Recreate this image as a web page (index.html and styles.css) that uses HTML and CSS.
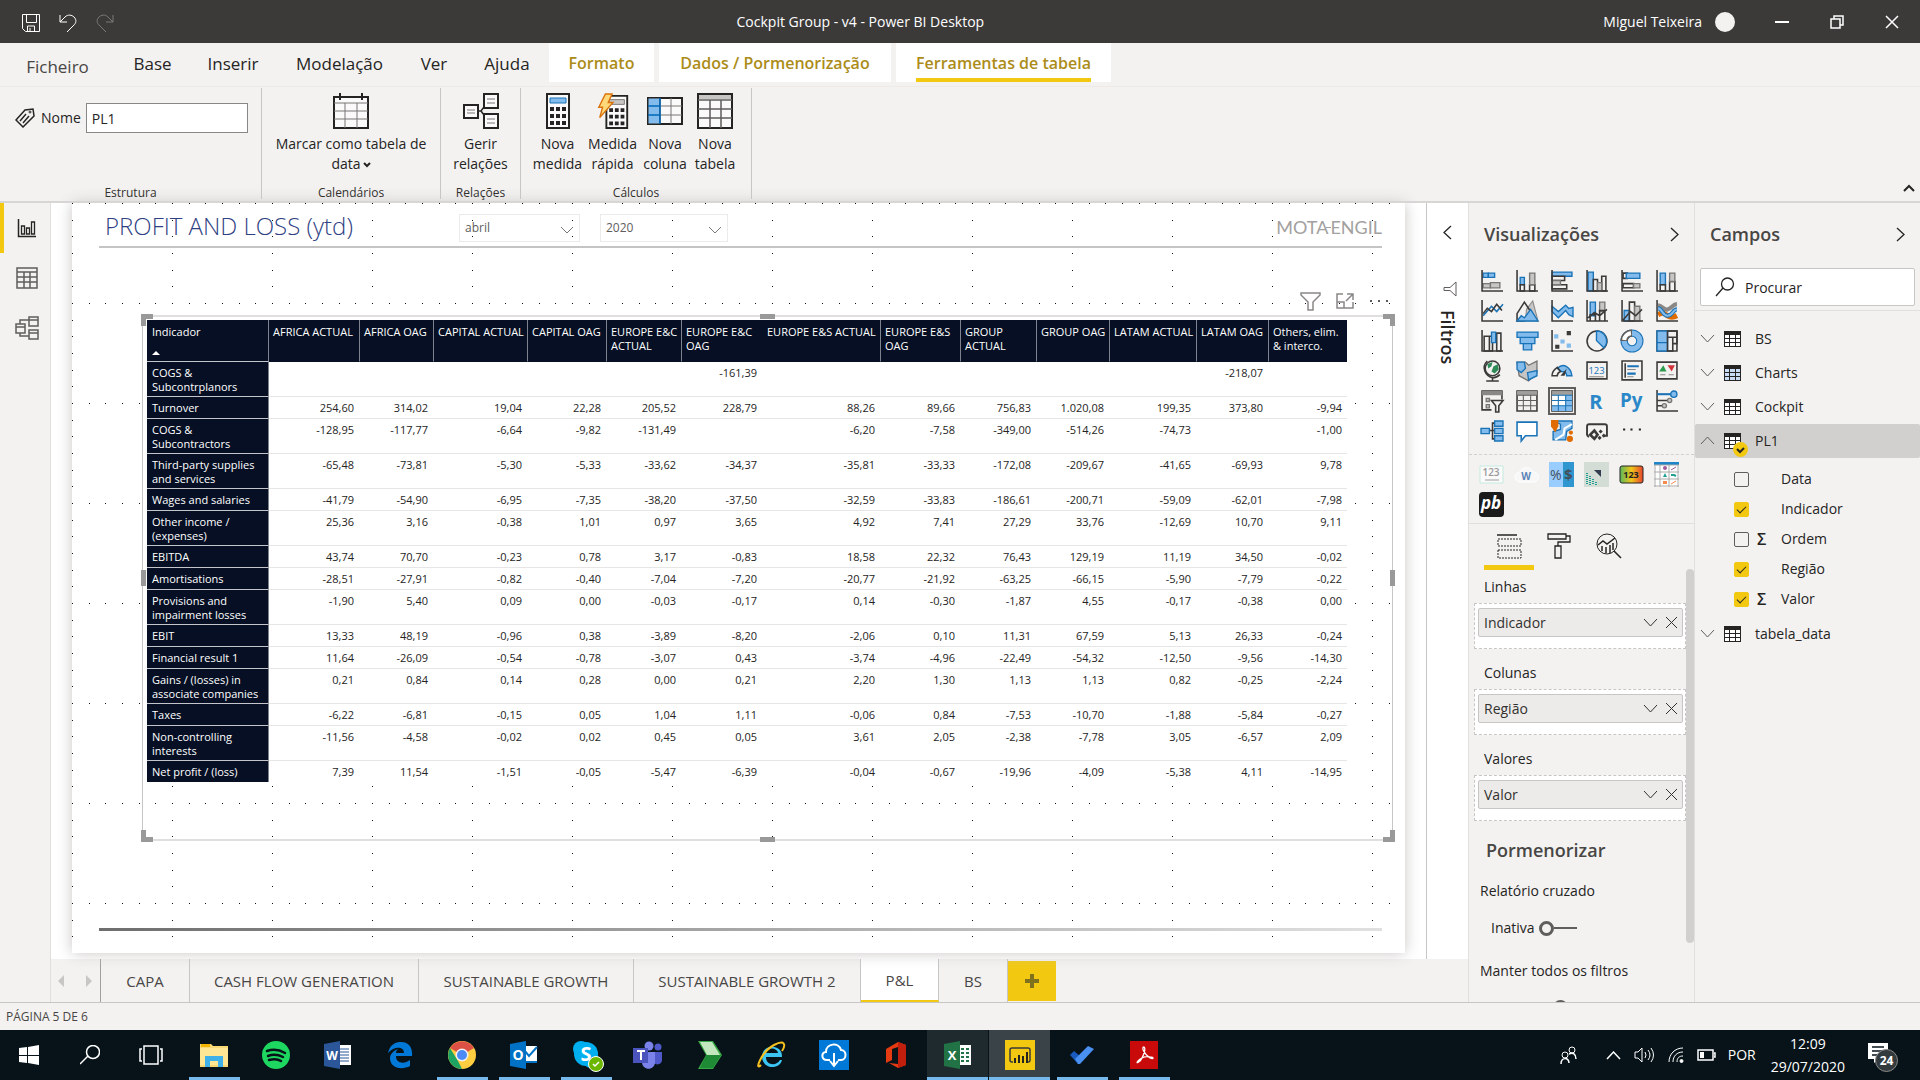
FILE: index.html
```html
<!DOCTYPE html>
<html lang="pt">
<head>
<meta charset="utf-8">
<title>Cockpit Group - v4 - Power BI Desktop</title>
<link rel="stylesheet" href="styles.css">
</head>
<body>
<header class="titlebar">
  <div class="quick">
    <button aria-label="Guardar"><svg width="18" height="18" viewBox="0 0 18 18" class="ln"><path d="M.5.5h17v17h-14l-3-3zM4.500.5v8h10v-8M5.500 17v-5h7v5M8 14v3"/></svg></button>
    <button aria-label="Anular"><svg width="18" height="19" viewBox="0 0 18 19" class="ln"><path d="M1 1v7h7M1 8l5-5c3-3 7-2 9 0 3 3 2 6 0 8l-7 7"/></svg></button>
    <button aria-label="Refazer" class="dim"><svg width="18" height="19" viewBox="0 0 18 19" class="ln"><path d="M17 1v7h-7M17 8l-5-5C9 0 5 1 3 3 0 6 1 9 3 11l7 7"/></svg></button>
  </div>
  <h1>Cockpit Group - v4 - Power BI Desktop</h1>
  <div class="account">
    <span>Miguel Teixeira</span><i class="avatar"></i>
    <button aria-label="Minimizar"><svg width="14" height="14" viewBox="0 0 14 14" class="ln"><path d="M0 7h14" stroke-width="2"/></svg></button>
    <button aria-label="Restaurar"><svg width="14" height="14" viewBox="0 0 14 14" class="ln"><path d="M1 4h9v9H1zM4 4V1h9v9h-3" stroke-width="1.500"/></svg></button>
    <button aria-label="Fechar"><svg width="14" height="14" viewBox="0 0 14 14" class="ln"><path d="M1 1l12 12M13 1L1 13" stroke-width="1.500"/></svg></button>
  </div>
</header>

<nav class="menu">
  <a href="#" class="m-file">Ficheiro</a><a href="#" class="m-base">Base</a><a href="#" class="m-ins">Inserir</a><a href="#" class="m-mod">Modelação</a><a href="#" class="m-ver">Ver</a><a href="#" class="m-aj">Ajuda</a>
  <a href="#" class="ctx c-fmt">Formato</a><a href="#" class="ctx c-dad">Dados / Pormenorização</a><a href="#" class="ctx c-fer on"><span>Ferramentas de tabela</span></a>
</nav>

<section class="ribbon">
  <div class="group g1">
    <div class="tools name-row">
      <svg width="20" height="20" viewBox="0 0 20 20" class="ln"><path d="M1 12L10 2l8-1 1 7-11 11zM5 13l6-7M8 15l6-7" stroke-width="1.500"/><circle cx="15" cy="4" r="1"/></svg>
      <label for="nome">Nome</label><input id="nome" value="PL1">
    </div>
    <h2>Estrutura</h2>
  </div>
  <div class="group g2">
    <div class="tools"><button><svg width="36" height="36" viewBox="0 0 36 36" class="ln"><path d="M1 4h34v31H1z" fill="#fafafa" stroke-width="2"/><path d="M1 10h34M1 18h34M1 26h34M12 10v25M24 10v25" stroke="#797775"/><path d="M7 0v7M29 0v7" stroke-width="2"/></svg><span>Marcar como tabela de<br>data<svg width="8" height="8" viewBox="0 0 8 8" class="ln"><path d="M1 2l3 3 3-3" stroke-width="2"/></svg></span></button></div>
    <h2>Calendários</h2>
  </div>
  <div class="group g3">
    <div class="tools"><button><svg width="36" height="36" viewBox="0 0 36 36" class="ln"><path d="M15 18h3l6-8M18 18l6 8" stroke-width="1.500"/><path d="M1 12h14v13H1zM21 1h14v14H21zM21 21h14v14H21z" fill="#fafafa" stroke-width="2"/><path d="M4 17h8M4 20h8M24 6h8M24 10h8M24 26h8M24 30h8" stroke="#797775"/></svg><span>Gerir<br>relações</span></button></div>
    <h2>Relações</h2>
  </div>
  <div class="group g4">
    <div class="tools">
      <button class="b55"><svg width="24" height="36" viewBox="0 0 24 36" class="ln"><path d="M1 1h22v34H1z" fill="#fafafa" stroke-width="2"/><path d="M4 5h16v5H4z" fill="#83bcec" stroke="#1a73b7"/><path d="M4 16h16M4 23h16M4 30h16" stroke-width="4" stroke-dasharray="4 2"/></svg><span>Nova<br>medida</span></button>
      <button class="b55"><svg width="32" height="38" viewBox="0 0 32 38" class="ln"><path d="M9 3h22v34H9z" fill="#fafafa" stroke-width="2"/><path d="M12 7h16v5H12z" fill="#c8c6c4" stroke="#797775"/><path d="M12 18h16M12 25h16M12 32h16" stroke-width="4" stroke-dasharray="4 2"/><path d="M8 1h7l-4 9h5L2 26l3-11H1z" fill="#ffd97a" stroke="#d9730d" stroke-width="1.500"/></svg><span>Medida<br>rápida</span></button>
      <button class="b50"><svg width="36" height="36" viewBox="0 0 36 36" class="ln"><path d="M1 5h34v26H1z" fill="#fafafa" stroke-width="2"/><path d="M1 5h12v26H1z" fill="#83bcec"/><path d="M13 13h22M13 22h22M24 5v26" stroke="#797775"/><path d="M13 5v26M1 13h12M1 22h12" stroke="#0067b8" stroke-width="1.500"/></svg><span>Nova<br>coluna</span></button>
      <button class="b50"><svg width="36" height="36" viewBox="0 0 36 36" class="ln"><path d="M1 1h34v34H1z" fill="#fafafa" stroke-width="2"/><path d="M2 2h32v4H2z" fill="#c8c6c4" stroke="none"/><path d="M1 7h34M1 16h34M1 25h34M13 7v28M24 7v28" stroke="#605e5c" stroke-width="1.500"/></svg><span>Nova<br>tabela</span></button>
    </div>
    <h2>Cálculos</h2>
  </div>
  <button class="collapse" aria-label="Recolher"><svg width="12" height="8" viewBox="0 0 12 8" class="ln"><path d="M1 7l5-5 5 5" stroke-width="2"/></svg></button>
</section>

<main class="work">
  <nav class="rail">
    <button class="on" aria-label="Relatório"><svg width="20" height="20" viewBox="0 0 20 20" class="ln"><path d="M1.500 1v17.500H19" stroke-width="1.500"/><path d="M4.500 8h3v8h-3zM9.500 10h3v6h-3zM14.500 4h3v12h-3z" stroke-width="1.300"/></svg></button>
    <button aria-label="Dados"><svg width="22" height="22" viewBox="0 0 22 22" class="ln gr"><path d="M1 1h20v20H1zM1 5h20M1 10h20M1 15h20M8 5v16M14 5v16" stroke-width="1.500"/></svg></button>
    <button aria-label="Modelo"><svg width="24" height="24" viewBox="0 0 24 24" class="ln gr"><path d="M1 8h9v9H1zM14 1h9v9h-9zM14 14h9v9h-9zM1 11h9M14 4h9M14 17h9M5 8V4h9M5 17v3h9" stroke-width="1.500"/></svg></button>
  </nav>

  <div class="center">
    <div class="stage">
      <article class="page">
        <svg class="dots" width="100%" height="100%" aria-hidden="true"><defs><pattern id="grid" width="100" height="100" patternUnits="userSpaceOnUse"><path d="M0 0h1v1H0zM17 0h1v1h-1zM33 0h1v1h-1zM50 0h1v1h-1zM67 0h1v1h-1zM83 0h1v1h-1zM0 17h1v1H0zM0 33h1v1H0zM0 50h1v1H0zM0 67h1v1H0zM0 83h1v1H0z" fill="#111"/></pattern></defs><rect width="100%" height="100%" fill="url(#grid)"/></svg>
        <header class="page-head">
          <h2>PROFIT AND LOSS (ytd)</h2>
          <div class="slicer s1"><select aria-label="Mês"><option>abril</option></select><svg width="14" height="8" viewBox="0 0 14 8" class="ln"><path d="M1 1l6 6 6-6"/></svg></div>
          <div class="slicer s2"><select aria-label="Ano"><option>2020</option></select><svg width="14" height="8" viewBox="0 0 14 8" class="ln"><path d="M1 1l6 6 6-6"/></svg></div>
          <div class="brand">MOTA<i></i>ENGIL</div>
        </header>
        <div class="visual-tools">
          <button aria-label="Filtros"><svg width="21" height="19" viewBox="0 0 21 19" class="ln"><path d="M1 1h19v2l-7 7v8H8v-8L1 3z" stroke-width="1.500"/></svg></button>
          <button aria-label="Modo de detalhe"><svg width="18" height="16" viewBox="0 0 18 16" class="ln"><path d="M7 1H1v14h16V9M11 1h6v6M17 1l-7 7M1 9h7v6" stroke-width="1.500"/></svg></button>
          <button aria-label="Mais"><svg width="20" height="4" viewBox="0 0 20 4"><path d="M1 1h2v2H1zM9 1h2v2H9zM17 1h2v2h-2z" fill="#605e5c"/></svg></button>
        </div>
        <div class="visual">
          <i class="h tl"></i><i class="h tm"></i><i class="h tr"></i><i class="h ml"></i><i class="h mr"></i><i class="h bl"></i><i class="h bm"></i><i class="h br"></i>
          <table>
            <colgroup><col class="w122"><col class="w91"><col class="w74"><col class="w94"><col class="w79"><col class="w75"><col class="w81"><col class="w118"><col class="w80"><col class="w76"><col class="w73"><col class="w87"><col class="w72"><col class="w78"></colgroup>
            <thead><tr><th>Indicador<span class="sort"></span></th><th>AFRICA ACTUAL</th><th>AFRICA OAG</th><th>CAPITAL ACTUAL</th><th>CAPITAL OAG</th><th>EUROPE E&amp;C<br>ACTUAL</th><th class="nb">EUROPE E&amp;C<br>OAG</th><th>EUROPE E&amp;S ACTUAL</th><th>EUROPE E&amp;S<br>OAG</th><th>GROUP<br>ACTUAL</th><th>GROUP OAG</th><th>LATAM ACTUAL</th><th>LATAM OAG</th><th class="nb">Others, elim.<br>&amp; interco.</th></tr></thead>
            <tbody>
            <tr><th>COGS &amp;<br>Subcontrplanors</th><td></td><td></td><td></td><td></td><td></td><td>-161,39</td><td></td><td></td><td></td><td></td><td></td><td>-218,07</td><td></td></tr>
            <tr><th>Turnover</th><td>254,60</td><td>314,02</td><td>19,04</td><td>22,28</td><td>205,52</td><td>228,79</td><td>88,26</td><td>89,66</td><td>756,83</td><td>1.020,08</td><td>199,35</td><td>373,80</td><td>-9,94</td></tr>
            <tr><th>COGS &amp;<br>Subcontractors</th><td>-128,95</td><td>-117,77</td><td>-6,64</td><td>-9,82</td><td>-131,49</td><td></td><td>-6,20</td><td>-7,58</td><td>-349,00</td><td>-514,26</td><td>-74,73</td><td></td><td>-1,00</td></tr>
            <tr><th>Third-party supplies<br>and services</th><td>-65,48</td><td>-73,81</td><td>-5,30</td><td>-5,33</td><td>-33,62</td><td>-34,37</td><td>-35,81</td><td>-33,33</td><td>-172,08</td><td>-209,67</td><td>-41,65</td><td>-69,93</td><td>9,78</td></tr>
            <tr><th>Wages and salaries</th><td>-41,79</td><td>-54,90</td><td>-6,95</td><td>-7,35</td><td>-38,20</td><td>-37,50</td><td>-32,59</td><td>-33,83</td><td>-186,61</td><td>-200,71</td><td>-59,09</td><td>-62,01</td><td>-7,98</td></tr>
            <tr><th>Other income /<br>(expenses)</th><td>25,36</td><td>3,16</td><td>-0,38</td><td>1,01</td><td>0,97</td><td>3,65</td><td>4,92</td><td>7,41</td><td>27,29</td><td>33,76</td><td>-12,69</td><td>10,70</td><td>9,11</td></tr>
            <tr><th>EBITDA</th><td>43,74</td><td>70,70</td><td>-0,23</td><td>0,78</td><td>3,17</td><td>-0,83</td><td>18,58</td><td>22,32</td><td>76,43</td><td>129,19</td><td>11,19</td><td>34,50</td><td>-0,02</td></tr>
            <tr><th>Amortisations</th><td>-28,51</td><td>-27,91</td><td>-0,82</td><td>-0,40</td><td>-7,04</td><td>-7,20</td><td>-20,77</td><td>-21,92</td><td>-63,25</td><td>-66,15</td><td>-5,90</td><td>-7,79</td><td>-0,22</td></tr>
            <tr><th>Provisions and<br>impairment losses</th><td>-1,90</td><td>5,40</td><td>0,09</td><td>0,00</td><td>-0,03</td><td>-0,17</td><td>0,14</td><td>-0,30</td><td>-1,87</td><td>4,55</td><td>-0,17</td><td>-0,38</td><td>0,00</td></tr>
            <tr><th>EBIT</th><td>13,33</td><td>48,19</td><td>-0,96</td><td>0,38</td><td>-3,89</td><td>-8,20</td><td>-2,06</td><td>0,10</td><td>11,31</td><td>67,59</td><td>5,13</td><td>26,33</td><td>-0,24</td></tr>
            <tr><th>Financial result 1</th><td>11,64</td><td>-26,09</td><td>-0,54</td><td>-0,78</td><td>-3,07</td><td>0,43</td><td>-3,74</td><td>-4,96</td><td>-22,49</td><td>-54,32</td><td>-12,50</td><td>-9,56</td><td>-14,30</td></tr>
            <tr><th>Gains / (losses) in<br>associate companies</th><td>0,21</td><td>0,84</td><td>0,14</td><td>0,28</td><td>0,00</td><td>0,21</td><td>2,20</td><td>1,30</td><td>1,13</td><td>1,13</td><td>0,82</td><td>-0,25</td><td>-2,24</td></tr>
            <tr><th>Taxes</th><td>-6,22</td><td>-6,81</td><td>-0,15</td><td>0,05</td><td>1,04</td><td>1,11</td><td>-0,06</td><td>0,84</td><td>-7,53</td><td>-10,70</td><td>-1,88</td><td>-5,84</td><td>-0,27</td></tr>
            <tr><th>Non-controlling<br>interests</th><td>-11,56</td><td>-4,58</td><td>-0,02</td><td>0,02</td><td>0,45</td><td>0,05</td><td>3,61</td><td>2,05</td><td>-2,38</td><td>-7,78</td><td>3,05</td><td>-6,57</td><td>2,09</td></tr>
            <tr><th>Net profit / (loss)</th><td>7,39</td><td>11,54</td><td>-1,51</td><td>-0,05</td><td>-5,47</td><td>-6,39</td><td>-0,04</td><td>-0,67</td><td>-19,96</td><td>-4,09</td><td>-5,38</td><td>4,11</td><td>-14,95</td></tr>
            </tbody>
          </table>
        </div>
        <div class="page-foot"></div>
      </article>
      <aside class="filters">
        <button aria-label="Expandir"><svg width="9" height="15" viewBox="0 0 9 15" class="ln"><path d="M8 1L1 7.500 8 14" stroke-width="1.300"/></svg></button>
        <svg width="14" height="16" viewBox="0 0 14 16" class="ln"><path d="M13 1v14L7 9.500H1v-3h6z"/></svg>
        <h2>Filtros</h2>
      </aside>
    </div>
    <nav class="tabs">
      <div class="arrows"><svg width="34" height="12" viewBox="0 0 34 12"><path d="M6 0v12L0 6zM28 0v12l6-6z" fill="#c8c6c4"/></svg></div>
      <button class="t89">CAPA</button><button class="t229">CASH FLOW GENERATION</button><button class="t215">SUSTAINABLE GROWTH</button><button class="t227">SUSTAINABLE GROWTH 2</button><button class="t78 on">P&amp;L</button><button class="t69">BS</button><button class="add" aria-label="Nova página"><svg width="14" height="14" viewBox="0 0 14 14"><path d="M5 0h4v5h5v4H9v5H5V9H0V5h5z" fill="#80711f"/></svg></button>
    </nav>
  </div>

  <aside class="viz">
    <div class="pane-head"><h2>Visualizações</h2><button aria-label="Recolher"><svg width="9" height="15" viewBox="0 0 9 15" class="ln"><path d="M1 1l7 6.500L1 14" stroke-width="1.300"/></svg></button></div>
    <div class="gallery">
      <svg viewBox="0 0 21 21"><path class="b" d="M2 3h5v4H2z" fill="#fff"/><path class="b" d="M7 3h6v4H7z"/><path class="g" d="M2 13h7v4H2z" fill="#fff"/><path class="g" d="M9 12h9v5H9z"/><path class="k" d="M1 0v20h20"/></svg>
      <svg viewBox="0 0 21 21"><path class="b" d="M4 7h4v7H4z"/><path class="k" d="M4 14h4v6H4zM13 14h5v6h-5z"/><path class="g" d="M13 3h5v11h-5z"/><path class="k" d="M1 0v20h20"/></svg>
      <svg viewBox="0 0 21 21"><path class="b" d="M1 2h19v4H1z"/><path class="k" d="M1 6h12v4H1zM1 14h14v4H1z"/><path class="g" d="M1 10h8v4H1z"/><path class="k" d="M1 0v20h20"/></svg>
      <svg viewBox="0 0 21 21"><path class="b" d="M2 2h5v18H2z"/><path class="k" d="M7 9h4v11H7zM15 6h4v14h-4z"/><path class="g" d="M11 12h4v8h-4z"/><path class="k" d="M1 0v20h20"/></svg>
      <svg viewBox="0 0 21 21"><path class="k" d="M2 3h4v5H2zM2 13h10v4H2z"/><path class="b" d="M5 3h13v5H5z"/><path class="g" d="M12 13h6v4h-6z"/><path class="k" d="M1 0v20h20"/></svg>
      <svg viewBox="0 0 21 21"><path class="b" d="M4 3h5v11H4z"/><path class="k" d="M4 14h5v6H4zM13 11h5v9h-5z"/><path class="g" d="M13 3h5v8h-5z"/><path class="k" d="M1 0v20h20"/></svg>

      <svg viewBox="0 0 21 21"><path class="bl" d="M2 15l8-9 5 5 6-7"/><path class="k" d="M2 13l4-5 4 3 5-7 5 6"/><path class="k" d="M1 0v20h20"/></svg>
      <svg viewBox="0 0 21 21"><path d="M10 9l6-8 5 19H9z" fill="#c8c6c4" stroke="#8a8886"/><path d="M1 13l7-11 6 9-6 9H1z" fill="#fff" class="k"/><path class="b" d="M1 20l4-5 3 2 6-8 7 11z"/></svg>
      <svg viewBox="0 0 21 21"><path class="b" d="M1 6l6 5 7-6 3 3 4-1v9l-4-2-3-4-7 7-6-6z"/><path class="k" d="M1 0v20h20"/></svg>
      <svg viewBox="0 0 21 21"><path class="b" d="M4 2h5v13H4z"/><path class="g" d="M13 2h5v9h-5z"/><path class="k" d="M4 14h5v6H4zM13 10h5v10h-5zM2 17l6-5 5 3 7-6M1 0v20h20"/></svg>
      <svg viewBox="0 0 21 21"><path class="b" d="M3 10h5v10H3z"/><path class="k" d="M8 2h5v18H8z"/><path class="g" d="M13 6h5v14h-5z"/><path class="k" d="M2 19l7-8 5 4 6-6M1 0v20h20"/></svg>
      <svg viewBox="0 0 21 21"><path d="M2 5c4 0 5 5 9 4s5-5 9-5" fill="none" stroke="#8a8886" stroke-width="4"/><path d="M2 14c5-3 6-1 9 1s5 2 9 0" fill="none" stroke="#e06c00" stroke-width="5"/><path d="M2 8c4 0 4 7 9 7s5-6 9-6" fill="none" stroke="#1a73b7" stroke-width="4"/><path d="M2 8c4 0 4 7 9 7s5-6 9-6" fill="none" stroke="#83bcec" stroke-width="2"/><path class="k" d="M1 0v20h20"/></svg>

      <svg viewBox="0 0 21 21"><path class="k" d="M3 6h5v14H3zM8 6h3v14H8zM15 3h4v17h-4z"/><path class="b" d="M10 2h4v10h-4z"/><path class="k" d="M1 0v20h20"/></svg>
      <svg viewBox="0 0 21 21"><path class="b" d="M1 2h20v5H1zM4 7h14v6H4zM7 13h8v6H7z"/></svg>
      <svg viewBox="0 0 21 21"><path d="M3 4h4v4H3zM9 9h4v4H9zM15 13h4v4h-4z" fill="#83bcec"/><path d="M15 1h4v4h-4zM4 14h4v4H4z" fill="#3b3a39"/><path class="k" d="M1 0v20h20"/></svg>
      <svg viewBox="0 0 21 21"><circle cx="10.500" cy="10.500" r="9.500" fill="#fff" class="k"/><path class="b" d="M10 1a9.500 9.500 0 0 1 7 16l-7-7z"/></svg>
      <svg viewBox="0 0 21 21"><circle cx="10.500" cy="10.500" r="7.500" fill="none" stroke="#1a73b7" stroke-width="7"/><circle cx="10.500" cy="10.500" r="7.500" fill="none" stroke="#83bcec" stroke-width="5"/><path d="M3 10.500A7.500 7.500 0 0 1 10.500 3" fill="none" stroke="#605e5c" stroke-width="7"/><path d="M3 9.500A7.500 7.500 0 0 1 9.500 3" fill="none" stroke="#fff" stroke-width="4"/></svg>
      <svg viewBox="0 0 21 21"><path class="k" d="M1 1h19v19H1z"/><path class="b" d="M1 1h10v11H1zM1 12h10v8H1z"/><path class="k" d="M11 1h9v6h-9zM11 7h5v13h-5zM16 7h4v6h-4z"/></svg>

      <svg viewBox="0 0 21 21"><circle cx="11" cy="8" r="7" fill="#fff" class="k"/><path d="M6 4l5-2-1 4-3 2zM12 6l4-2 1 5-4 4-3-2z" fill="#2e8b57"/><path class="k" d="M6 1c-6 6-2 14 5 16 3 0 5-1 7-3M11 17v3M5 20h12"/></svg>
      <svg viewBox="0 0 21 21"><path class="g" d="M1 2h8l3 3 8-4v11l-8 8-9-5z"/><path class="b" d="M1 2h7l1 6-4 4-4-3zM11 12l9-2v5l-8 4z"/></svg>
      <svg viewBox="0 0 21 21"><path class="b" d="M6 8c6-6 13-1 14 7h-5c0-3-2-4-5-4z"/><path d="M1 15C1 11 3 9 6 7l3 4c-2 1-3 2-3 4z" fill="#fff" class="k"/><path d="M9 15l6-7-2 7z" fill="#3b3a39"/></svg>
      <svg viewBox="0 0 21 21"><path class="k" d="M1 2h19v16H1z"/><text x="10" y="13" text-anchor="middle" font-size="9" fill="#1a73b7">123</text><path d="M3 16h14" stroke="#8a8886"/></svg>
      <svg viewBox="0 0 21 21"><path class="k" d="M1 1h19v18H1zM4 3v14"/><path d="M6 6h11M6 13h8" stroke="#1a73b7" stroke-width="2"/><path d="M6 9h8M6 16h6" stroke="#8a8886"/></svg>
      <svg viewBox="0 0 21 21"><path class="k" d="M1 2h19v16H1z"/><path d="M3 11l4-6 3 6z" fill="#2e9b4f"/><path d="M11 5h7l-3 6z" fill="#d13438"/><path d="M4 14h5M12 14h5" stroke="#8a8886"/></svg>

      <svg viewBox="0 0 21 21"><path class="k" d="M10 19H1V1h19v8"/><path d="M1 1h19v4H1z" fill="#8a8886"/><path class="g" d="M5 8h3v3H5zM5 14h3v3H5z"/><path class="k" d="M10 10h11l-4 5v6h-3v-6z"/></svg>
      <svg viewBox="0 0 21 21"><path class="k" d="M1 1h19v19H1z"/><path d="M1 1h19v4H1z" fill="#a19f9d"/><path d="M1 5h19M1 10h19M1 15h19M7 5v15M14 5v15" stroke="#605e5c"/></svg>
      <svg viewBox="0 0 21 21" class="sel"><path class="k" d="M1 1h19v19H1z"/><path d="M1 5h13v10H1z" fill="#fff"/><path d="M1 1h19v4H1z" fill="#a19f9d"/><path d="M14 5h6v15H1v-5h13z" fill="#83bcec"/><path d="M1 5h19M1 10h19M1 15h19M7 5v15M14 5v15" stroke="#1a73b7"/></svg>
      <svg viewBox="0 0 21 21"><text x="3" y="18" font-size="19" font-weight="700" fill="#2b88c8">R</text></svg>
      <svg viewBox="0 0 21 21"><text x="-1" y="16" font-size="18" font-weight="700" fill="#2b88c8">Py</text></svg>
      <svg viewBox="0 0 21 21"><path class="k" d="M1 0v20h20"/><path d="M1 4h14" stroke="#1a73b7" stroke-width="2"/><circle class="b" cx="17" cy="4" r="3"/><path class="k" d="M1 10h10M1 15h5"/><circle class="g" cx="13" cy="10" r="2"/><circle class="g" cx="8" cy="15" r="2"/></svg>

      <svg viewBox="0 0 21 21"><path class="k" d="M7 10h7M14 3h-3v15h3" stroke-width="2"/><path class="b" d="M0 8h8v5H0zM13 1h8v5h-8zM13 8h8v5h-8zM13 15h8v5h-8z"/></svg>
      <svg viewBox="0 0 21 21"><path d="M1 2h19v13H9l-4 5v-5H1z" fill="#fff" stroke="#1a73b7" stroke-width="1.500"/></svg>
      <svg viewBox="0 0 21 21"><path class="b" d="M2 1h18v7l-5 3-1 8H2v-8l7-2V4z"/><path d="M4 19l8-5 1-6 7-4" fill="none" stroke="#fff" stroke-width="2"/><path d="M0 0h7v6l-3 6-4-6z" fill="#e06c00"/><circle cx="18" cy="18" r="3" fill="#e06c00"/><circle cx="19" cy="12" r="2" fill="#e06c00"/></svg>
      <svg viewBox="0 0 21 21"><path d="M3 16c-3-1-2-3-2-5V6q0-2 2-2h15q2 0 2 2v9h-2" fill="none" stroke="#3b3a39" stroke-width="1.800"/><path d="M8 10l3 4-3 4-4-4z" fill="none" stroke="#3b3a39" stroke-width="2.500"/><path d="M14 9l2 2-2 2-2-2zM17 13l2 2-2 2-2-2zM13 15l2 2-2 2-2-2z" fill="#3b3a39"/></svg>
      <svg viewBox="0 0 21 21"><path d="M2 8h2v2H2zM9 8h2v2H9zM17 8h2v2h-2z" fill="#252423"/></svg>
    </div>
    <div class="gallery custom">
      <svg viewBox="0 0 25 25"><path d="M1 4h23v17H1z" fill="#fafafa" stroke="#c4eadf"/><text x="12" y="14" text-anchor="middle" font-size="10" font-weight="600" fill="#999">123</text><path d="M6 18h14" stroke="#ccc" stroke-width="2"/></svg>
      <svg viewBox="0 0 25 25"><path d="M6 20a5 5 0 0 1 0-10c2-6 11-6 13 0a5 5 0 0 1 1 10z" fill="#f7f7f7" stroke="#fff"/><text x="12" y="18" text-anchor="middle" font-size="10" font-weight="700" fill="#5b84b8">W</text></svg>
      <svg viewBox="0 0 25 25"><path d="M0 0h14v25H0z" fill="#99ccff"/><path d="M14 0h11v25H14z" fill="#2f96cf"/><text x="1" y="18" font-size="14" fill="#44505c">%</text><text x="15" y="18" font-size="15" font-weight="700" fill="#44505c">$</text></svg>
      <svg viewBox="0 0 25 25"><path d="M0 0h25v25H0z" fill="#d3ddd5"/><path d="M10 8h7v7z" fill="#333f50"/><path d="M3 11v12M6 14v9M9 17v6M12 20v3" stroke="#1fa090" stroke-width="2" stroke-dasharray="1 1"/></svg>
      <svg viewBox="0 0 25 25"><defs><linearGradient id="heat"><stop offset="0" stop-color="#5cb85c"/><stop offset=".5" stop-color="#f0c419"/><stop offset="1" stop-color="#e8452c"/></linearGradient></defs><rect x="1" y="4" width="23" height="17" rx="2" fill="url(#heat)" stroke="#222"/><text x="12" y="16" text-anchor="middle" font-size="9" font-weight="700" fill="#222">123</text></svg>
      <svg viewBox="0 0 25 25"><path d="M0 0h25v25H0z" fill="#fff"/><path d="M0 0h25v3H0z" fill="#1e86c8"/><path d="M0 3h25M0 10h25M0 17h25M0 24h25M1 3v22M6 3v22M15 3v22M24 3v22" stroke="#aaa"/><circle cx="11" cy="6" r="2" fill="#a05a9c"/><path d="M9 15l2-4 2 4z" fill="#1fa090"/><path d="M9 19h4v3H9z" fill="#f58b4c"/><path d="M17 8l5-3" stroke="#a05a9c"/><path d="M17 13h3l2 1" stroke="#1fa090" stroke-width="2"/><path d="M17 22l5-3" stroke="#f58b4c"/></svg>
      <svg viewBox="0 0 25 25"><rect width="25" height="25" rx="4" fill="#1b1b1b"/><text x="12" y="17" text-anchor="middle" font-size="17" font-weight="700" font-style="italic" fill="#fff">pb</text></svg>
    </div>
    <div class="modes">
      <button class="on" aria-label="Campos"><svg width="25" height="26" viewBox="0 0 25 26" class="ln"><path d="M0 1h20" stroke-width="1.500"/><path d="M1 5h23v7H1zM1 16h23v8H1z" stroke-dasharray="2 1"/></svg></button>
      <button aria-label="Formato"><svg width="24" height="26" viewBox="0 0 24 26" class="ln"><path d="M1 1h18v5H1zM19 3h4v6H11v4M8 13h6v12H8z" stroke-width="1.300"/></svg></button>
      <button aria-label="Análise"><svg width="26" height="26" viewBox="0 0 26 26" class="ln"><circle cx="11" cy="11" r="10"/><path d="M18 18l7 7M2 12l5-4 4 3 8-6M6 13v5M10 14v6M14 12v8M17 10v7" stroke-width="1.500"/></svg></button>
    </div>
    <div class="wells">
      <h3>Linhas</h3>
      <div class="well"><div class="chip">Indicador<button aria-label="Menu"><svg width="15" height="9" viewBox="0 0 15 9" class="ln"><path d="M1 1l6.500 7L14 1"/></svg></button><button aria-label="Remover"><svg width="11" height="11" viewBox="0 0 11 11" class="ln"><path d="M0 0l11 11M11 0L0 11"/></svg></button></div></div>
      <h3>Colunas</h3>
      <div class="well"><div class="chip">Região<button aria-label="Menu"><svg width="15" height="9" viewBox="0 0 15 9" class="ln"><path d="M1 1l6.500 7L14 1"/></svg></button><button aria-label="Remover"><svg width="11" height="11" viewBox="0 0 11 11" class="ln"><path d="M0 0l11 11M11 0L0 11"/></svg></button></div></div>
      <h3>Valores</h3>
      <div class="well"><div class="chip">Valor<button aria-label="Menu"><svg width="15" height="9" viewBox="0 0 15 9" class="ln"><path d="M1 1l6.500 7L14 1"/></svg></button><button aria-label="Remover"><svg width="11" height="11" viewBox="0 0 11 11" class="ln"><path d="M0 0l11 11M11 0L0 11"/></svg></button></div></div>
      <h2>Pormenorizar</h2>
      <p>Relatório cruzado</p>
      <label class="toggle">Inativa<input type="checkbox"></label>
      <p>Manter todos os filtros</p>
      <div class="toggle t2"><input type="checkbox" aria-label="Manter todos os filtros"></div>
      <i class="scroll"></i>
    </div>
  </aside>

  <aside class="fields">
    <div class="pane-head"><h2>Campos</h2><button aria-label="Recolher"><svg width="9" height="15" viewBox="0 0 9 15" class="ln"><path d="M1 1l7 6.500L1 14" stroke-width="1.300"/></svg></button></div>
    <div class="search"><svg width="20" height="20" viewBox="0 0 20 20" class="ln"><circle cx="12.500" cy="7" r="6" stroke-width="1.300"/><path d="M8 11l-7 8" stroke-width="1.300"/></svg><input aria-label="Procurar" placeholder="Procurar"></div>
    <ul class="tree">
      <li><svg class="chev ln" viewBox="0 0 15 9"><path d="M1 1l6.500 7L14 1"/></svg><svg class="tb" viewBox="0 0 17 16"><path d="M0 0h17v16H0z" fill="#252423"/><path d="M1 4h4v3H1zM6 4h5v3H6zM12 4h4v3h-4zM1 8h4v3H1zM6 8h5v3H6zM12 8h4v3h-4zM1 12h4v3H1zM6 12h5v3H6zM12 12h4v3h-4z" fill="#fff"/></svg>BS</li>
      <li><svg class="chev ln" viewBox="0 0 15 9"><path d="M1 1l6.500 7L14 1"/></svg><svg class="tb" viewBox="0 0 17 16"><path d="M0 0h17v16H0z" fill="#252423"/><path d="M1 4h4v3H1zM6 4h5v3H6zM12 4h4v3h-4zM1 8h4v3H1zM6 8h5v3H6zM12 8h4v3h-4zM1 12h4v3H1zM6 12h5v3H6zM12 12h4v3h-4z" fill="#c9dcf5"/></svg>Charts</li>
      <li><svg class="chev ln" viewBox="0 0 15 9"><path d="M1 1l6.500 7L14 1"/></svg><svg class="tb" viewBox="0 0 17 16"><path d="M0 0h17v16H0z" fill="#252423"/><path d="M1 4h4v3H1zM6 4h5v3H6zM12 4h4v3h-4zM1 8h4v3H1zM6 8h5v3H6zM12 8h4v3h-4zM1 12h4v3H1zM6 12h5v3H6zM12 12h4v3h-4z" fill="#fff"/></svg>Cockpit</li>
      <li class="on"><svg class="chev ln" viewBox="0 0 15 9"><path d="M1 8l6.500-7L14 8"/></svg><svg class="tb" viewBox="0 0 17 16"><path d="M0 0h17v16H0z" fill="#252423"/><path d="M1 4h4v3H1zM6 4h5v3H6zM12 4h4v3h-4zM1 8h4v3H1zM6 8h5v3H6zM12 8h4v3h-4zM1 12h4v3H1zM6 12h5v3H6zM12 12h4v3h-4z" fill="#fff"/><circle cx="16.500" cy="16.500" r="7.500" fill="#f2c811"/><path d="M13 16l3 3 4-4" fill="none" stroke="#252423" stroke-width="2"/></svg>PL1</li>
      <li class="kids"><ul>
        <li><label><input type="checkbox"><b></b>Data</label></li>
        <li><label><input type="checkbox" checked><b></b>Indicador</label></li>
        <li><label><input type="checkbox"><b>Σ</b>Ordem</label></li>
        <li><label><input type="checkbox" checked><b></b>Região</label></li>
        <li><label><input type="checkbox" checked><b>Σ</b>Valor</label></li>
      </ul></li>
      <li><svg class="chev ln" viewBox="0 0 15 9"><path d="M1 1l6.500 7L14 1"/></svg><svg class="tb" viewBox="0 0 17 16"><path d="M0 0h17v16H0z" fill="#252423"/><path d="M1 4h4v3H1zM6 4h5v3H6zM12 4h4v3h-4zM1 8h4v3H1zM6 8h5v3H6zM12 8h4v3h-4zM1 12h4v3H1zM6 12h5v3H6zM12 12h4v3h-4z" fill="#fff"/></svg>tabela_data</li>
    </ul>
  </aside>
</main>

<footer class="status">PÁGINA 5 DE 6</footer>

<footer class="taskbar">
  <button aria-label="Iniciar"><svg width="20" height="20" viewBox="0 0 20 20"><path d="M0 3l8-1v8H0zM9 2l11-2v10H9zM0 11h8v7l-8-1zM9 11h11v9L9 18z" fill="#fff"/></svg></button>
  <button aria-label="Procurar"><svg width="20" height="20" viewBox="0 0 20 20" class="ln w"><circle cx="13" cy="7" r="6.500" stroke-width="1.500"/><path d="M8 11l-8 8" stroke-width="1.500"/></svg></button>
  <button aria-label="Vista de tarefas"><svg width="24" height="20" viewBox="0 0 24 20" class="ln w"><path d="M5 1h14v18H5zM3 4H1v12h2M21 4h2v12h-2" stroke-width="1.500"/></svg></button>
  <button class="run" aria-label="Explorador"><svg width="28" height="24" viewBox="0 0 28 24"><path d="M0 1h11l2 2h15v21H0z" fill="#f8d775"/><path d="M0 5h28v17H0z" fill="#ffe694"/><path d="M1 1h9v3H1z" fill="#f4b400"/><path d="M5 13h18v11h-5v-6h-8v6H5z" fill="#3fb1e8"/></svg></button>
  <button aria-label="Spotify"><svg width="28" height="28" viewBox="0 0 28 28"><circle cx="14" cy="14" r="14" fill="#1ed760"/><path d="M5 10c6-2 13-1 18 2M6 15c5-2 11-1 15 1M7 19c4-1 9-1 12 1" fill="none" stroke="#071318" stroke-width="2.500" stroke-linecap="round"/></svg></button>
  <button aria-label="Word"><svg width="28" height="28" viewBox="0 0 28 28"><path d="M14 4h13v20H14z" fill="#fff"/><path d="M16 8h9M16 11h9M16 14h9M16 17h9M16 20h9" stroke="#2b579a"/><path d="M0 3l16-3v28L0 25z" fill="#2b579a"/><text x="8" y="19" text-anchor="middle" font-size="12" font-weight="700" fill="#fff">W</text></svg></button>
  <button aria-label="Edge"><svg width="26" height="28" viewBox="0 0 26 28"><path d="M1 12C3 3 9 1 14 1c8 0 12 6 11 14H9c0 8 9 8 14 4v6C16 29 4 28 3 18c0-5 3-8 8-10-2 2-2 3-2 4h8c0-7-10-7-16 0z" fill="#0078d7"/></svg></button>
  <button class="run" aria-label="Chrome"><svg width="28" height="28" viewBox="0 0 28 28"><circle cx="14" cy="14" r="14" fill="#ffcd40"/><path d="M14 14L2 7a14 14 0 0 1 24 0z" fill="#dd5144"/><path d="M2 7l8 13 4 8A14 14 0 0 1 2 7z" fill="#1da462"/><circle cx="14" cy="14" r="6.500" fill="#f1f1f1"/><circle cx="14" cy="14" r="5" fill="#4c8bf5"/></svg></button>
  <button class="run" aria-label="Outlook"><svg width="28" height="28" viewBox="0 0 28 28"><path d="M14 5h13v16H14z" fill="#fff"/><path d="M14 9l5 6 8-9M14 21h13" fill="none" stroke="#0072c6" stroke-width="2"/><path d="M0 3l16-3v28L0 25z" fill="#0072c6"/><text x="8" y="19" text-anchor="middle" font-size="14" font-weight="700" fill="#fff">O</text></svg></button>
  <button class="run sk" aria-label="Skype"><svg width="32" height="32" viewBox="0 0 32 32"><circle cx="9" cy="9" r="8" fill="#00aff0"/><circle cx="19" cy="20" r="8" fill="#00aff0"/><circle cx="14" cy="14" r="12" fill="#00aff0"/><text x="14" y="21" text-anchor="middle" font-size="20" font-weight="700" fill="#fff">S</text><circle cx="24" cy="24" r="7.500" fill="#6bb700" stroke="#fff"/><path d="M21 24l2 2 4-4" fill="none" stroke="#fff" stroke-width="1.500"/></svg></button>
  <button aria-label="Teams"><svg width="30" height="28" viewBox="0 0 30 28"><circle cx="16" cy="5" r="4.500" fill="#7b83eb"/><circle cx="25" cy="6" r="3.500" fill="#5059c9"/><path d="M20 11h9v8c0 4-5 6-8 3z" fill="#5059c9"/><path d="M9 11h13v10c0 9-13 9-13 0z" fill="#7b83eb"/><path d="M0 7h15v15H0z" fill="#4b53bc"/><path d="M4 10h8M8 10v9" stroke="#fff" stroke-width="2"/></svg></button>
  <button aria-label="Project"><svg width="24" height="30" viewBox="0 0 24 30"><path d="M0 1h15l9 14-9 14H0l8-14z" fill="#39a846"/><path d="M2 2h12l8 13H9z" fill="#c3e8bf"/><path d="M8 15h15l-8 13H2z" fill="#1f8a35"/></svg></button>
  <button aria-label="Internet Explorer"><svg width="30" height="30" viewBox="0 0 30 30"><path d="M23 20c-3 6-14 6-14-3h16C26 4 6 3 5 16c0 14 18 14 20 4zM9 13c1-6 11-6 12 0z" fill="#3cc5f2" fill-rule="evenodd"/><path d="M4 25C-3 32 4 12 17 5c11-6 12 0 8 6" fill="none" stroke="#f7c11f" stroke-width="2"/></svg></button>
  <button aria-label="Nuvem"><svg width="30" height="30" viewBox="0 0 30 30"><path d="M0 0h30v30H0z" fill="#0078d7"/><path d="M11 20H8c-6 0-6-8-1-8 0-9 13-10 15-2 6 0 6 10 0 10h-3M15 13v12M11 21l4 5 4-5" fill="none" stroke="#fff" stroke-width="2"/></svg></button>
  <button aria-label="Office"><svg width="20" height="26" viewBox="0 0 20 26"><path d="M0 7l12-7 8 3v20l-8 3L3 21l9 1V5L6 7v11l-6 3z" fill="#e43b12"/><path d="M12 0l8 3v20l-8 3z" fill="#c11f0d"/></svg></button>
  <button class="run wide" aria-label="Excel"><svg width="28" height="28" viewBox="0 0 28 28"><path d="M14 4h13v20H14z" fill="#fff"/><path d="M17 8h8M17 12h8M17 16h8M17 20h8" stroke="#217346" stroke-width="2" stroke-dasharray="3 2"/><path d="M0 3l16-3v28L0 25z" fill="#217346"/><text x="8" y="19" text-anchor="middle" font-size="13" font-weight="700" fill="#fff">X</text></svg></button>
  <button class="run wide act" aria-label="Power BI"><svg width="30" height="30" viewBox="0 0 30 30"><path d="M0 0h30v30H0z" fill="#f2c811"/><path d="M8 22H7q-2 0-2-2V10q0-2 2-2h16q2 0 2 2v10q0 2-2 2" fill="none" stroke="#3b3a39" stroke-width="1.500"/><path d="M9 18h2v5H9zM13 15h2v8h-2zM17 16h2v7h-2zM21 12h2v11h-2z" fill="#252423"/></svg></button>
  <button class="run" aria-label="To Do"><svg width="24" height="20" viewBox="0 0 24 20"><path d="M0 10l4-4 7 6-3 7z" fill="#185abd"/><path d="M8 19L5 14 18 1l6 3L10 19z" fill="#4a90f0"/></svg></button>
  <button class="run" aria-label="Acrobat"><svg width="28" height="28" viewBox="0 0 28 28"><path d="M0 0h28v28H0z" fill="#c80a0a"/><path d="M14 6c-3 0 0 7 6 11 4 2 4-1 0-1-4-1-9 1-12 4s2 2 4-3c2-4 4-10 2-11z" fill="none" stroke="#fff" stroke-width="1.300"/></svg></button>
  <div class="tray">
    <svg class="people ln w" width="18" height="20" viewBox="0 0 18 20"><circle cx="12" cy="5" r="3"/><circle cx="5" cy="10" r="3"/><path d="M1 19c0-7 8-7 8-1M9 9c4-2 7 0 7 5" stroke-width="1.500"/></svg>
    <svg class="ln w" width="15" height="9" viewBox="0 0 15 9"><path d="M1 8l6.500-7L14 8" stroke-width="1.500"/></svg>
    <svg class="ln w" width="21" height="18" viewBox="0 0 21 18"><path d="M1 6h3l4-4v14l-4-4H1zM11 6q2 3 0 6M14 4q4 5 0 10M17 2q5 7 0 14"/></svg>
    <svg class="ln w" width="16" height="16" viewBox="0 0 16 16"><path d="M1 15C1 7 7 1 15 1M5 15c0-6 4-10 10-10M9 15c0-4 2-6 6-6" /><circle cx="13.500" cy="14" r="1.500" fill="#fff"/></svg>
    <svg class="ln w" width="19" height="12" viewBox="0 0 19 12"><path d="M1 1h15v10H1zM17 4h1v4h-1" stroke-width="1.500"/><path d="M3 3h4v6H3z" fill="#fff" stroke="none"/></svg>
    <span class="lang">POR</span>
    <time>12:09<br>29/07/2020</time>
    <div class="notes"><svg width="22" height="20" viewBox="0 0 22 20"><path d="M1 0h20v16h-9l-5 4v-4H1z" fill="#fff"/><path d="M5 4h12M5 8h12M5 12h8" stroke="#071318" stroke-width="1.500"/></svg><b>24</b></div>
  </div>
</footer>
</body>
</html>
```
FILE: styles.css
```css
*, *::before, *::after { box-sizing: border-box; }
body { margin: 0; height: 100vh; display: flex; flex-direction: column; overflow: hidden; background: #f3f2f1; color: #252423; font: 15px/20px "Open Sans", "Noto Sans", sans-serif; }
h1, h2, h3, p, ul { margin: 0; padding: 0; font-weight: 400; list-style: none; }
button { font: inherit; color: inherit; background: none; border: 0; padding: 0; display: flex; align-items: center; justify-content: center; }
a { color: inherit; text-decoration: none; }
svg { display: block; flex: none; }
.ln { fill: none; stroke: currentColor; }
.gr { color: #605e5c; }

.titlebar { height: 43px; flex: none; display: grid; grid-template-columns: 7fr auto 9fr; align-items: center; background: #3b3a39; color: #fff; padding: 0 21px 0 22px; }
.titlebar h1 { font-size: 14px; padding-left: 3px; }
.quick { display: flex; gap: 19px; padding-top: 3px; }
.dim { color: #7b7978; }
.account { display: flex; align-items: center; justify-content: flex-end; font-size: 14px; }
.avatar { width: 20px; height: 20px; border-radius: 50%; background: #f3f2f1; margin: 0 40px 0 13px; }
.account button { width: 14px; margin-left: 41px; }
.account .avatar + button { margin-left: 0; }

.menu { height: 44px; flex: none; display: flex; align-items: flex-start; font-size: 17px; line-height: 41px; border-bottom: 1px solid #edebe9; white-space: nowrap; text-align: center; }
.menu a { flex: none; }
.m-file { width: 115px; padding-top: 3px; color: #484644; }
.m-base { width: 75px; }
.m-ins { width: 86px; }
.m-mod { width: 127px; }
.m-ver { width: 62px; }
.m-aj { width: 84px; }
.ctx { height: 39px; background: #fff; color: #ac8c19; font-weight: 600; font-size: 16px; margin-right: 5px; }
.c-fmt { width: 105px; }
.c-dad { width: 232px; }
.c-fer { width: 215px; }
.ctx.on span { display: inline-block; height: 39px; border-bottom: 4px solid #f2c811; }

.ribbon { height: 116px; flex: none; display: flex; border-bottom: 2px solid #d8d6d4; position: relative; z-index: 2; padding-top: 1px; }
.group { display: flex; flex-direction: column; justify-content: space-between; border-right: 1px solid #c8c6c4; height: 111px; text-align: center; }
.group h2 { font-size: 12px; line-height: 13px; color: #323130; }
.g1 { width: 262px; }
.g2 { width: 179px; }
.g3 { width: 80px; }
.g4 { width: 231px; }
.tools { display: flex; justify-content: center; }
.tools button { flex-direction: column; justify-content: flex-start; padding-top: 5px; gap: 5px; font-size: 14px; white-space: nowrap; }
.tools button > svg { height: 36px; }
.tools button span svg { display: inline; margin-left: 2px; }
.g4 .tools { justify-content: flex-start; padding-left: 9px; }
.b55 { width: 55px; }
.b50 { width: 50px; }
.name-row { justify-content: flex-start; align-items: center; padding: 15px 13px 0 15px; font-size: 14px; }
.name-row label { margin: 0 5px 0 6px; }
.name-row input { flex: 1; min-width: 0; height: 30px; border: 1px solid #8a8886; background: #fff; font: inherit; padding: 1px 5px 0; color: #252423; }
.collapse { margin: auto 5px 9px auto; width: 12px; }

.work { flex: 1; display: flex; min-height: 0; border-bottom: 1px solid #c8c6c4; }
.rail { width: 51px; flex: none; border-right: 1px solid #e1dfdd; }
.rail button { width: 100%; height: 50px; padding-left: 3px; }
.rail button.on { border-left: 4px solid #f2c811; padding: 0; }
.center { flex: 1; min-width: 0; display: flex; flex-direction: column; }
.stage { flex: 1; min-height: 0; display: flex; background: #fff; }

.page { flex: 1; min-width: 0; margin: 0 21px 6px; background: #fff; box-shadow: 0 0 14px #c8c6c4; position: relative; display: flex; flex-direction: column; padding: 0 12px 22px 27px; }
.dots { position: absolute; inset: 0; pointer-events: none; z-index: 1; }
.page-head { height: 45px; margin-right: 11px; display: flex; align-items: center; padding-top: 2px; border-bottom: 2px solid #c4c4c4; }
.page-head h2 { font-size: 24px; font-weight: 300; line-height: 30px; color: #2f3f83; width: 360px; padding-left: 6px; white-space: nowrap; }
.slicer { position: relative; height: 28px; margin-top: 4px; border: 1px solid #edebe9; }
.slicer select { appearance: none; border: 0; background: none; width: 100%; height: 100%; padding: 0 5px; font: 12px "Open Sans", sans-serif; color: #605e5c; }
.slicer svg { position: absolute; right: 5px; top: 11px; color: #797775; }
.s1 { width: 121px; margin-right: 20px; }
.s2 { width: 128px; }
.brand { margin-left: auto; display: flex; align-items: center; font: 18px/20px Lato, sans-serif; color: #a3a1a0; padding-top: 2px; }
.brand i { width: 5px; height: 1px; background: #a3a1a0; margin: 2px -1px 0 -2px; }
.visual-tools { display: flex; justify-content: flex-end; align-items: center; gap: 15px; height: 18px; margin: 44px 4px 5px 0; color: #8a8886; position: relative; z-index: 3; }
.visual { position: relative; z-index: 2; margin-left: 43px; height: 526px; border: 1px solid #c8c6c4; border-width: 2px 1px; border-top-color: #e1dfdd; border-bottom-color: #e1dfdd; padding: 3px 0 0 4px; }
.h { position: absolute; border: 0 solid #999; }
.tl, .tr, .bl, .br { width: 12px; height: 12px; }
.tl { left: -2px; top: -3px; border-width: 5px 0 0 5px; }
.tr { right: -3px; top: -3px; border-width: 5px 5px 0 0; }
.bl { left: -2px; bottom: -3px; border-width: 0 0 5px 5px; }
.br { right: -3px; bottom: -3px; border-width: 0 5px 5px 0; }
.tm, .bm { width: 15px; height: 5px; left: 617px; background: #999; }
.tm { top: -3px; }
.bm { bottom: -3px; }
.ml, .mr { width: 5px; height: 16px; top: 253px; background: #999; }
.ml { left: -2px; }
.mr { right: -3px; }
.page-foot { margin: auto 11px 0 0; height: 3px; background: linear-gradient(90deg, #6e6e6e, #e0e0e0); }

table { table-layout: fixed; width: 1200px; border-collapse: separate; border-spacing: 0; font-size: 11px; line-height: 14px; color: #252423; background: #fff; }
th, td { height: 22px; padding: 4px 6px 2px; vertical-align: top; white-space: nowrap; font-weight: 400; border-bottom: 1px solid #e6e6e6; }
td { text-align: right; }
td:last-child { padding-right: 5px; }
th { background: #060f24; color: #fff; text-align: left; border-right: 1px solid #7d828c; border-bottom-color: #c3c5ca; padding: 4px 5px 2px; }
thead th { height: 42px; padding: 5px 4px 0; border-bottom-color: #060f24; }
thead th:first-child { padding-left: 5px; border-bottom-color: #c3c5ca; }
thead .nb { border-right-color: #060f24; }
tbody tr:last-child > * { border-bottom: 0; height: 21px; }
.sort { display: block; width: 0; border: 4px solid transparent; border-top: 0; border-bottom-color: #fff; margin-top: 12px; }
.w122 { width: 122px; } .w91 { width: 91px; } .w74 { width: 74px; } .w94 { width: 94px; } .w79 { width: 79px; } .w75 { width: 75px; } .w81 { width: 81px; } .w118 { width: 118px; } .w80 { width: 80px; } .w76 { width: 76px; } .w73 { width: 73px; } .w87 { width: 87px; } .w72 { width: 72px; } .w78 { width: 78px; }

.filters { width: 42px; flex: none; border-left: 1px solid #c8c6c4; display: flex; flex-direction: column; align-items: center; padding-top: 22px; background: #fff; }
.filters > svg { margin: 41px 0 13px 5px; color: #605e5c; }
.filters h2 { writing-mode: vertical-rl; font-weight: 600; font-size: 18px; }

.tabs { height: 43px; flex: none; display: flex; font-size: 15px; color: #484644; }
.arrows { width: 50px; display: flex; align-items: center; padding-left: 7px; border-right: 1px solid #a19f9d; }
.tabs button { border-right: 1px solid #c8c6c4; white-space: nowrap; }
.tabs .on { background: #fff; border-bottom: 2px solid #f2c811; }
.t89 { width: 89px; } .t229 { width: 229px; } .t215 { width: 215px; } .t227 { width: 227px; } .t78 { width: 78px; } .t69 { width: 69px; }
.tabs .add { width: 48px; height: 40px; margin-top: 2px; background: #f2c811; border: 0; }

.viz { width: 226px; flex: none; border-left: 1px solid #e1dfdd; display: flex; flex-direction: column; }
.fields { width: 226px; flex: none; border-left: 1px solid #e1dfdd; }
.pane-head { height: 60px; flex: none; display: flex; align-items: center; justify-content: space-between; padding: 2px 15px 0 15px; }
.pane-head h2, .wells h2 { font-size: 18px; font-weight: 600; color: #484644; }
.gallery { display: grid; grid-template-columns: repeat(6, 35px); grid-auto-rows: 30px; padding: 7px 0 0 12px; height: 192px; border-bottom: 1px dashed #d2d0ce; }
.gallery svg { width: 22px; height: 22px; overflow: visible; }
.gallery .k { fill: none; stroke: #3b3a39; stroke-width: 1.500; }
.gallery .b { fill: #83bcec; stroke: #1a73b7; stroke-width: 1.300; }
.gallery .g { fill: #c8c6c4; stroke: #797775; stroke-width: 1.300; }
.gallery .bl { fill: none; stroke: #1a73b7; stroke-width: 1.500; }
.gallery .sel { outline: 2px solid #605e5c; outline-offset: 1px; background: #d2d0ce; }
.gallery.custom { height: 69px; padding: 7px 0 0 10px; border-bottom: 1px solid #e1dfdd; }
.custom svg { width: 25px; height: 25px; }
.modes { display: flex; height: 45px; padding-left: 15px; }
.modes button { width: 50px; height: 46px; padding-bottom: 3px; }
.modes .on { border-bottom: 5px solid #f2c811; padding: 4px 0 0; }
.wells { flex: 1; min-height: 0; overflow: hidden; position: relative; font-size: 14px; padding: 7px 8px 0 5px; }
.wells h3 { font-size: 14px; line-height: 22px; padding-left: 10px; margin-bottom: 5px; }
.well { height: 46px; border: 1px dashed #c8c6c4; background: #fff; padding: 4px 2px 0 3px; margin-bottom: 13px; }
.chip { height: 29px; border: 1px solid #c8c6c4; border-radius: 2px; background: #edebe9; display: flex; align-items: center; gap: 8px; padding: 0 5px; color: #323130; }
.chip button:first-of-type { margin-left: auto; }
.wells h2 { margin: 19px 0 21px 12px; line-height: 20px; }
.wells p { padding-left: 6px; }
.toggle { display: flex; align-items: center; gap: 4px; margin: 17px 0 23px 17px; }
.toggle input { appearance: none; margin: 0; width: 38px; height: 15px; display: flex; align-items: center; }
.toggle input::before { content: ""; width: 15px; height: 15px; border: 3px solid #605e5c; border-radius: 50%; }
.toggle input::after { content: ""; flex: 1; height: 2px; background: #605e5c; }
.t2 { margin: 19px 0 0 79px; }
.scroll { position: absolute; right: 0; top: 0; width: 8px; height: 374px; border-radius: 4px; background: #d2d0ce; }

.search { margin: 5px 5px 4px 5px; height: 38px; border: 1px solid #c8c6c4; border-radius: 2px; background: #fff; display: flex; align-items: center; padding: 0 14px; }
.search input { border: 0; outline: 0; background: none; font: 14px "Open Sans", sans-serif; min-width: 0; flex: 1; padding: 0 10px; }
.search input::placeholder { color: #252423; opacity: 1; }
.tree { border-top: 1px solid #e1dfdd; padding-top: 11px; font-size: 14px; }
.tree > li { height: 34px; display: flex; align-items: center; padding: 0 0 1px 5px; }
.chev { width: 15px; height: 9px; margin-right: 9px; color: #605e5c; }
.tb { width: 17px; height: 16px; margin-right: 14px; overflow: visible; }
.tree > .on { background: #d2d0ce; border-radius: 2px; }
.tree > .kids { height: auto; display: block; padding: 6px 0 3px 39px; }
.kids li { height: 30px; }
.kids label { display: flex; align-items: center; height: 30px; }
.kids b { width: 32px; padding-left: 8px; font-size: 16px; font-weight: 600; }
.kids input { appearance: none; width: 15px; height: 15px; margin: 0; border: 1px solid #605e5c; border-radius: 2px; display: flex; justify-content: center; }
.kids input:checked { background: #f2c811; border-color: #f2c811; }
.kids input:checked::after { content: ""; width: 5px; height: 9px; margin-top: 1px; border: solid #252423; border-width: 0 1px 1px 0; transform: rotate(45deg); }

.status { height: 27px; flex: none; padding-left: 6px; font-size: 12px; line-height: 27px; color: #484644; }
.taskbar { height: 50px; flex: none; display: flex; background: #071318; color: #fff; }
.taskbar button { width: 62px; flex: none; height: 50px; position: relative; }
.taskbar button:nth-child(-n+3) { width: 61px; padding-right: 3px; }
.taskbar .sk { padding: 2px 0 0 4px; }
.run::after { content: ""; position: absolute; left: 6px; right: 5px; bottom: 0; height: 3px; background: #76b9ed; }
.wide { background: #1f2a2f; border-right: 1px solid #071318; }
.act { background: #3a4347; }
.wide::after { left: 0; right: 0; }
.tray { margin-left: auto; display: flex; align-items: center; gap: 13px; font-size: 14px; }
.people { margin-right: 15px; }
.lang { margin-left: -1px; }
.tray time { text-align: center; line-height: 23px; padding-left: 2px; }
.notes { position: relative; width: 52px; height: 24px; padding-left: 9px; margin-right: 10px; }
.notes b { position: absolute; left: 17px; top: 6px; width: 23px; height: 23px; border-radius: 50%; background: #333b3f; border: 1px solid #8a8886; font-size: 12px; line-height: 21px; text-align: center; }
```
